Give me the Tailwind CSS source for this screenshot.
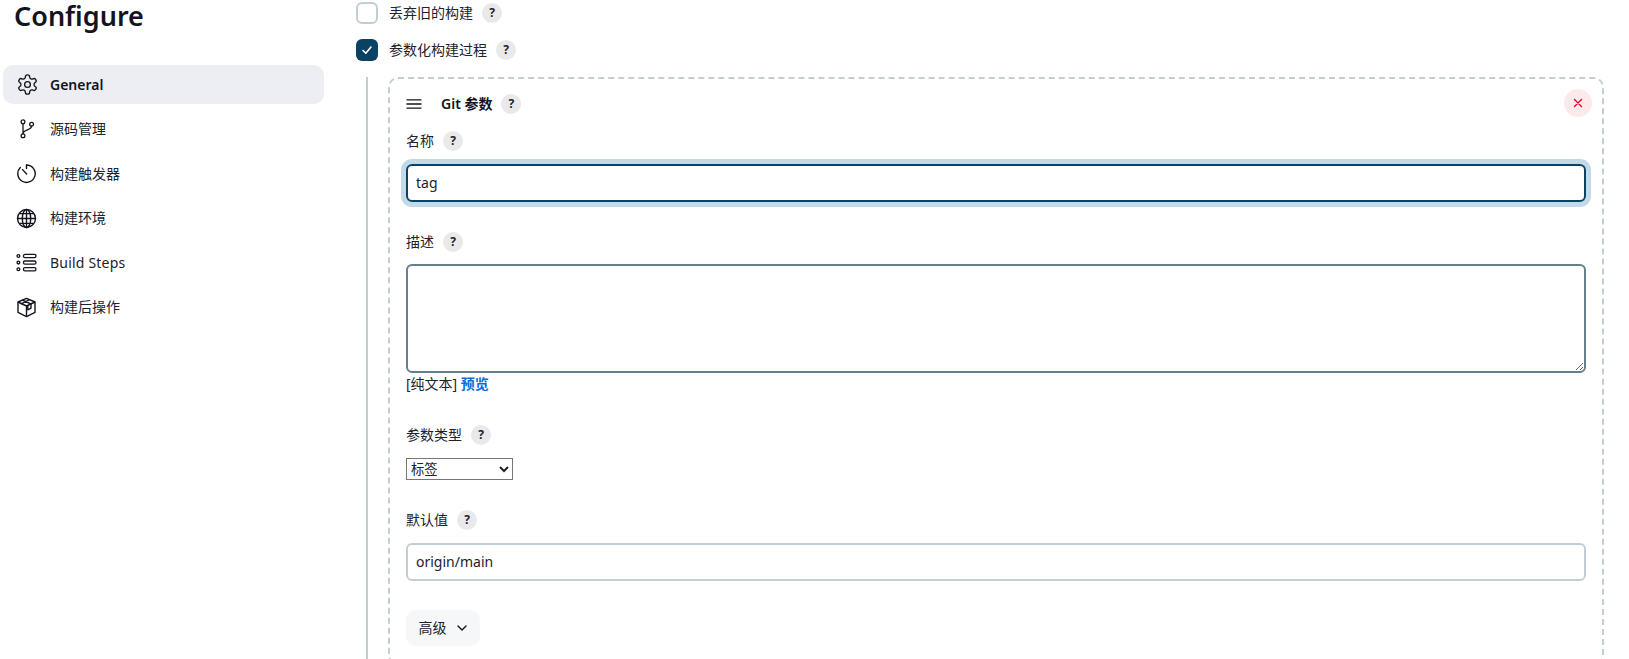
<!DOCTYPE html>
<html lang="zh">
<head>
<meta charset="utf-8">
<title>Configure</title>
<script src="https://cdn.jsdelivr.net/npm/@tailwindcss/browser@4"></script>
</head>
<body class="bg-white">
<div class="flex h-[659px] w-[1629px] overflow-hidden bg-white text-[14px] leading-[20px] text-[#22222c] font-['Noto_Sans','Noto_Sans_CJK_SC',sans-serif]">
  <aside class="w-[356px] shrink-0 pl-[3px]">
    <h1 class="ml-[11px] h-[65px] text-[27px] leading-[32px] font-semibold text-[#14141f]">Configure</h1>
    <nav class="flex w-[321px] flex-col gap-[5.5px]">
      <a class="flex h-[39px] items-center gap-[11px] rounded-[10px] bg-[#edeef3] pl-[13px] font-semibold text-[#14141f]">
        <svg class="h-[23px] w-[23px]" viewBox="0 0 24 24" fill="none" stroke="currentColor" stroke-width="1.4" stroke-linecap="round" stroke-linejoin="round"><path d="M12.22 2h-.44a2 2 0 0 0-2 2v.18a2 2 0 0 1-1 1.73l-.43.25a2 2 0 0 1-2 0l-.15-.08a2 2 0 0 0-2.73.73l-.22.38a2 2 0 0 0 .73 2.73l.15.1a2 2 0 0 1 1 1.72v.51a2 2 0 0 1-1 1.74l-.15.09a2 2 0 0 0-.73 2.73l.22.38a2 2 0 0 0 2.73.73l.15-.08a2 2 0 0 1 2 0l.43.25a2 2 0 0 1 1 1.73V20a2 2 0 0 0 2 2h.44a2 2 0 0 0 2-2v-.18a2 2 0 0 1 1-1.73l.43-.25a2 2 0 0 1 2 0l.15.08a2 2 0 0 0 2.73-.73l.22-.39a2 2 0 0 0-.73-2.73l-.15-.08a2 2 0 0 1-1-1.74v-.5a2 2 0 0 1 1-1.74l.15-.09a2 2 0 0 0 .73-2.73l-.22-.38a2 2 0 0 0-2.73-.73l-.15.08a2 2 0 0 1-2 0l-.43-.25a2 2 0 0 1-1-1.73V4a2 2 0 0 0-2-2z"/><circle cx="12" cy="12" r="3"/></svg>
        <span>General</span>
      </a>
      <a class="flex h-[39px] items-center gap-[13px] pl-[13px]">
        <svg class="h-[21px] w-[21px] text-[#14141f]" viewBox="0 0 21 21" fill="none" stroke="currentColor" stroke-width="1.3" stroke-linecap="round"><circle cx="7" cy="2.8" r="1.9"/><circle cx="7" cy="16.8" r="1.9"/><circle cx="15.6" cy="5.2" r="1.9"/><path d="M7 4.7v10.2M15.6 7.1c0 4.6-8.6 2.8-8.6 7.8"/></svg>
        <span>源码管理</span>
      </a>
      <a class="flex h-[39px] items-center gap-[13px] pl-[13px]">
        <svg class="h-[21px] w-[21px] text-[#14141f]" viewBox="0 0 21 21" fill="none" stroke="currentColor" stroke-width="1.4" stroke-linecap="round"><path d="M10.5 2a8.7 8.7 0 1 1-6.2 2.6"/><path d="M10.5 2v3.6"/><path d="M6.6 6.6l4 4.4"/></svg>
        <span>构建触发器</span>
      </a>
      <a class="flex h-[39px] items-center gap-[13px] pl-[13px]">
        <svg class="h-[21px] w-[21px] text-[#14141f]" viewBox="0 0 21 21" fill="none" stroke="currentColor" stroke-width="1.4"><circle cx="10.5" cy="10.5" r="9"/><ellipse cx="10.5" cy="10.5" rx="4.2" ry="9"/><path d="M10.5 1.5v18M1.5 10.5h18M3.2 5.6h14.6M3.2 15.4h14.6"/></svg>
        <span>构建环境</span>
      </a>
      <a class="flex h-[39px] items-center gap-[13px] pl-[13px]">
        <svg class="h-[21px] w-[21px] text-[#14141f]" viewBox="0 0 21 21" fill="none" stroke="currentColor" stroke-width="1.3"><rect x="7.4" y="2.4" width="12.6" height="3.2" rx="1.6"/><rect x="7.4" y="9" width="12.6" height="3.2" rx="1.6"/><rect x="7.4" y="15.6" width="12.6" height="3.2" rx="1.6"/><circle cx="2.4" cy="4" r="1.4"/><circle cx="2.4" cy="10.6" r="1.4"/><circle cx="2.4" cy="17.2" r="1.4"/></svg>
        <span class="tracking-[0.2px]">Build Steps</span>
      </a>
      <a class="flex h-[39px] items-center gap-[13px] pl-[13px]">
        <svg class="h-[21px] w-[21px] text-[#14141f]" viewBox="0 0 21 21" fill="none" stroke="currentColor" stroke-width="1.4" stroke-linejoin="round"><path d="M10.5 1.4 19 5v10.4l-8.5 4.2L2 15.4V5z"/><path d="M2 5l8.5 4L19 5M10.5 9v10.6"/><path d="M6.4 3.1 15 7v4.2l-3.2 1.6V8.4M13.6 2.6l-8.5 4.2"/></svg>
        <span>构建后操作</span>
      </a>
    </nav>
  </aside>

  <main class="min-w-0 flex-1">
    <div class="flex h-[26px] items-center">
      <span class="h-[22px] w-[22px] rounded-[6px] border-2 border-[#c3ced4] bg-white"></span>
      <span class="ml-[11px]">丢弃旧的构建</span>
      <span class="ml-[9px] flex h-[20px] w-[20px] items-center justify-center rounded-full bg-[#e9e9e9] text-[12px] font-bold">?</span>
    </div>
    <div class="mt-[11px] flex h-[26px] items-center">
      <span class="flex h-[22px] w-[22px] items-center justify-center rounded-[6px] bg-[#0b4163]">
        <svg class="h-[12px] w-[12px]" viewBox="0 0 12 12" fill="none" stroke="white" stroke-width="1.6" stroke-linecap="round" stroke-linejoin="round"><path d="M2 6.5 4.8 9.2 10 3"/></svg>
      </span>
      <span class="ml-[11px]">参数化构建过程</span>
      <span class="ml-[9px] flex h-[20px] w-[20px] items-center justify-center rounded-full bg-[#e9e9e9] text-[12px] font-bold">?</span>
    </div>
    <div class="mt-[14px] ml-[10px] border-l-2 border-[#c3ced4] pl-[20px]">
      <section class="relative h-[588px] w-[1216px] rounded-[10px] border-2 border-dashed border-[#c3ced4] pl-[16px] pr-[14px]">
        <div class="flex h-[52px] items-center pb-[2px]">
          <svg class="h-[16px] w-[16px]" viewBox="0 0 16 16" stroke="#14141f" stroke-width="1.3"><path d="M0.5 3.8h15M0.5 8h15M0.5 12.2h15"/></svg>
          <span class="ml-[19px] font-semibold text-[#14141f]">Git 参数</span>
          <span class="ml-[9px] flex h-[20px] w-[20px] items-center justify-center rounded-full bg-[#e9e9e9] text-[12px] font-bold">?</span>
        </div>
        <button class="absolute top-[10px] right-[10px] flex h-[28px] w-[28px] items-center justify-center rounded-full bg-[#fbe9eb]">
          <svg class="h-[10px] w-[10px]" viewBox="0 0 10 10" stroke="#e6002a" stroke-width="1.4" stroke-linecap="round"><path d="M1.5 1.5l7 7M8.5 1.5l-7 7"/></svg>
        </button>

        <div class="flex h-[20px] items-center">
          <span>名称</span>
          <span class="ml-[9px] flex h-[20px] w-[20px] items-center justify-center rounded-full bg-[#e9e9e9] text-[12px] font-bold">?</span>
        </div>
        <input value="tag" class="mt-[13px] block h-[38px] w-[1180px] rounded-[6px] border-2 border-[#0b4163] px-[8px] pb-[2px] text-[14px] shadow-[0_0_0_5px_#c2d9e7] outline-none">

        <div class="mt-[30px] flex h-[20px] items-center">
          <span>描述</span>
          <span class="ml-[9px] flex h-[20px] w-[20px] items-center justify-center rounded-full bg-[#e9e9e9] text-[12px] font-bold">?</span>
        </div>
        <textarea class="mt-[12px] block h-[109px] w-[1180px] resize-y rounded-[6px] border-2 border-[#65808f] outline-none"></textarea>
        <div class="mt-[1px] h-[20px]">[纯文本] <a class="font-semibold text-[#0b6bde]">预览</a></div>

        <div class="mt-[31px] flex h-[20px] items-center">
          <span>参数类型</span>
          <span class="ml-[9px] flex h-[20px] w-[20px] items-center justify-center rounded-full bg-[#e9e9e9] text-[12px] font-bold">?</span>
        </div>
        <select class="mt-[13px] block h-[22px] w-[107px] border border-[#767676] bg-white text-[13.33px] leading-[18px]"><option>标签</option></select>

        <div class="mt-[30px] flex h-[20px] items-center">
          <span>默认值</span>
          <span class="ml-[9px] flex h-[20px] w-[20px] items-center justify-center rounded-full bg-[#e9e9e9] text-[12px] font-bold">?</span>
        </div>
        <input value="origin/main" class="mt-[13px] block h-[38px] w-[1180px] rounded-[6px] border-2 border-[#c3ced4] px-[8px] pb-[2px] text-[14px] outline-none">

        <button class="mt-[29px] flex h-[36px] w-[74px] items-center justify-center gap-[9px] rounded-[10px] bg-[#f6f7f9]">
          <span>高级</span>
          <svg class="h-[12px] w-[12px]" viewBox="0 0 12 12" fill="none" stroke="#14141f" stroke-width="1.4" stroke-linecap="round" stroke-linejoin="round"><path d="M2 4l4 4 4-4"/></svg>
        </button>
      </section>
    </div>
  </main>
</div>
</body>
</html>
